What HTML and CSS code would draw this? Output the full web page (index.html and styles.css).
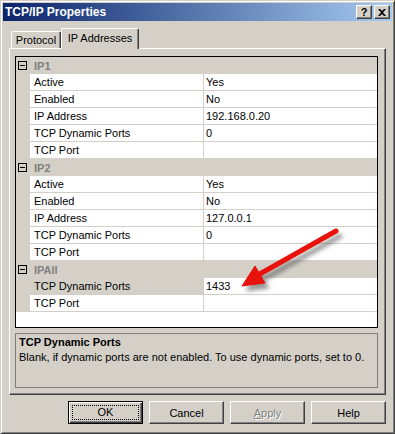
FILE: index.html
```html
<!DOCTYPE html>
<html lang="en">
<head>
    <meta charset="UTF-8">
    <title>TCP/IP Properties</title>
    <link rel="stylesheet" href="styles.css">
</head>
<body>
    <div class="window">
        <div class="titlebar">
            <span class="title">TCP/IP Properties</span>
            <div class="caption-buttons">
                <div class="cap-btn">?</div>
                <div class="cap-btn">
                    <svg width="8" height="7" viewBox="0 0 8 7"><path d="M0 0h2l2 2 2-2h2L5 3.5 8 7H6L4 5 2 7H0l3-3.5z" fill="#000"/></svg>
                </div>
            </div>
        </div>

        <div class="content">
            <div class="tabs">
                <div class="tab">Protocol</div>
                <div class="tab selected">IP Addresses</div>
            </div>

            <div class="panel">
                <div class="grid">
                    <div class="cat"><span class="minus"></span><span class="cat-name">IP1</span></div>
                    <div class="row"><span class="gutter"></span><span class="name">Active</span><span class="value">Yes</span></div>
                    <div class="row"><span class="gutter"></span><span class="name">Enabled</span><span class="value">No</span></div>
                    <div class="row"><span class="gutter"></span><span class="name">IP Address</span><span class="value">192.168.0.20</span></div>
                    <div class="row"><span class="gutter"></span><span class="name">TCP Dynamic Ports</span><span class="value">0</span></div>
                    <div class="row"><span class="gutter"></span><span class="name">TCP Port</span><span class="value"></span></div>

                    <div class="cat"><span class="minus"></span><span class="cat-name">IP2</span></div>
                    <div class="row"><span class="gutter"></span><span class="name">Active</span><span class="value">Yes</span></div>
                    <div class="row"><span class="gutter"></span><span class="name">Enabled</span><span class="value">No</span></div>
                    <div class="row"><span class="gutter"></span><span class="name">IP Address</span><span class="value">127.0.0.1</span></div>
                    <div class="row"><span class="gutter"></span><span class="name">TCP Dynamic Ports</span><span class="value">0</span></div>
                    <div class="row"><span class="gutter"></span><span class="name">TCP Port</span><span class="value"></span></div>

                    <div class="cat"><span class="minus"></span><span class="cat-name">IPAll</span></div>
                    <div class="row active"><span class="gutter"></span><span class="name">TCP Dynamic Ports</span><span class="value">1433</span></div>
                    <div class="row"><span class="gutter"></span><span class="name">TCP Port</span><span class="value"></span></div>
                </div>

                <div class="description">
                    <div class="desc-title">TCP Dynamic Ports</div>
                    <div>Blank, if dynamic ports are not enabled. To use dynamic ports, set to 0.</div>
                </div>
            </div>

            <div class="buttons">
                <button type="button" class="btn default"><span class="focus">OK</span></button>
                <button type="button" class="btn">Cancel</button>
                <button type="button" class="btn disabled"><span class="disabled-text"><u>A</u>pply</span></button>
                <button type="button" class="btn">Help</button>
            </div>
        </div>

        <!-- flecha roja encima de la cuadricula -->
        <svg class="arrow" width="395" height="434" viewBox="0 0 395 434">
            <defs>
                <filter id="shadow" x="-20%" y="-20%" width="140%" height="140%">
                    <feGaussianBlur stdDeviation="2"/>
                </filter>
            </defs>
            <g transform="translate(4 5)" filter="url(#shadow)" fill="#555" stroke="#555" opacity="0.6">
                <line x1="336" y1="231" x2="258" y2="275" stroke-width="5" stroke-linecap="round"/>
                <polygon points="242,286 255,266 265,283" stroke-width="1"/>
            </g>
            <line x1="336" y1="231" x2="258" y2="275" stroke="#e8120c" stroke-width="5" stroke-linecap="round"/>
            <polygon points="242,286 255,266 265,283" fill="#e8120c" stroke="#e8120c" stroke-width="1" stroke-linejoin="round"/>
        </svg>
    </div>
</body>
</html>
```

FILE: styles.css
```css
* {
    box-sizing: border-box;
}

body {
    margin: 0;
    font-family: "Liberation Sans", Arial, sans-serif;
    font-size: 11px;
    color: #000;
    background: #d4d0c8;
}

.window {
    position: relative;
    width: 395px;
    height: 434px;
    padding: 2px;
    background: #d4d0c8;
    border: 1px solid;
    border-color: #d4d0c8 #404040 #404040 #d4d0c8;
    box-shadow: inset 1px 1px #fff, inset -1px -1px #808080;
    display: flex;
    flex-direction: column;
}

/* barra de titulo */
.titlebar {
    height: 18px;
    display: flex;
    align-items: center;
    justify-content: space-between;
    padding: 0 2px 0 2px;
    background: linear-gradient(to right, #0a246a, #a6caf0);
}

.title {
    color: #fff;
    font-weight: bold;
    font-size: 12px;
}

.caption-buttons {
    display: flex;
    gap: 2px;
}

.cap-btn {
    width: 16px;
    height: 14px;
    background: #d4d0c8;
    border: 1px solid;
    border-color: #fff #404040 #404040 #fff;
    box-shadow: inset -1px -1px #808080;
    display: flex;
    align-items: center;
    justify-content: center;
    font-weight: bold;
    font-size: 11px;
    line-height: 1;
}

.content {
    flex: 1;
    padding: 7px 6px 0 6px;
    display: flex;
    flex-direction: column;
}

/* pestañas */
.tabs {
    display: flex;
    align-items: flex-end;
    height: 20px;
    padding-left: 2px;
}

.tab {
    width: 50px;
    height: 17px;
    padding-top: 2px;
    text-align: center;
    border: 1px solid;
    border-bottom: none;
    border-color: #fff #404040 #fff #fff;
    border-radius: 2px 2px 0 0;
    box-shadow: inset -1px 0 #808080;
    line-height: 13px;
    white-space: nowrap;
}

.tab.selected {
    position: relative;
    z-index: 1;
    width: 78px;
    height: 21px;
    margin-bottom: -1px;
    padding-top: 3px;
    background: #d4d0c8;
}

.panel {
    width: 377px;
    height: 347px;
    padding: 7px 7px 0 5px;
    border: 1px solid;
    border-color: #fff #404040 #404040 #fff;
    box-shadow: inset -1px -1px #808080;
}

/* cuadricula de propiedades */
.grid {
    width: 363px;
    height: 272px;
    background: #fff;
    border: 1px solid #000;
}

.row {
    display: flex;
    height: 17px;
    line-height: 16px;
}

.gutter {
    width: 14px;
    background: #d4d0c8;
}

.name {
    width: 174px;
    padding-left: 4px;
    border-right: 1px solid #d4d0c8;
    border-bottom: 1px solid #d4d0c8;
    white-space: nowrap;
}

.row.active .name {
    background: #d4d0c8;
}

.value {
    flex: 1;
    padding-left: 2px;
    border-bottom: 1px solid #d4d0c8;
}

.cat {
    display: flex;
    align-items: center;
    height: 17px;
    background: #d4d0c8;
}

.minus {
    position: relative;
    width: 9px;
    height: 9px;
    margin: 0 7px 0 2px;
    border: 1px solid #000;
}

.minus::after {
    content: "";
    position: absolute;
    left: 1px;
    top: 3px;
    width: 5px;
    height: 1px;
    background: #000;
}

.cat-name {
    color: #808080;
    font-weight: bold;
}

/* area de descripcion */
.description {
    width: 363px;
    height: 55px;
    margin-top: 5px;
    padding: 1px 3px;
    border: 1px solid #808080;
    line-height: 15px;
}

.desc-title {
    font-weight: bold;
}

/* botones */
.buttons {
    width: 377px;
    display: flex;
    justify-content: flex-end;
    gap: 6px;
    margin-top: 6px;
}

.btn {
    width: 75px;
    height: 23px;
    padding: 0;
    font-family: inherit;
    font-size: 11px;
    color: #000;
    background: #d4d0c8;
    border: 1px solid;
    border-color: #fff #404040 #404040 #fff;
    box-shadow: inset -1px -1px #808080;
}

.btn.default {
    border: 1px solid #000;
    box-shadow: inset 1px 1px #fff, inset -1px -1px #404040, inset -2px -2px #808080;
    padding: 3px;
}

.focus {
    display: block;
    height: 15px;
    line-height: 13px;
    border: 1px dotted #000;
}

.disabled-text {
    color: #808080;
    text-shadow: 1px 1px #fff;
}

.arrow {
    position: absolute;
    left: -1px;
    top: -1px;
    pointer-events: none;
}
```
